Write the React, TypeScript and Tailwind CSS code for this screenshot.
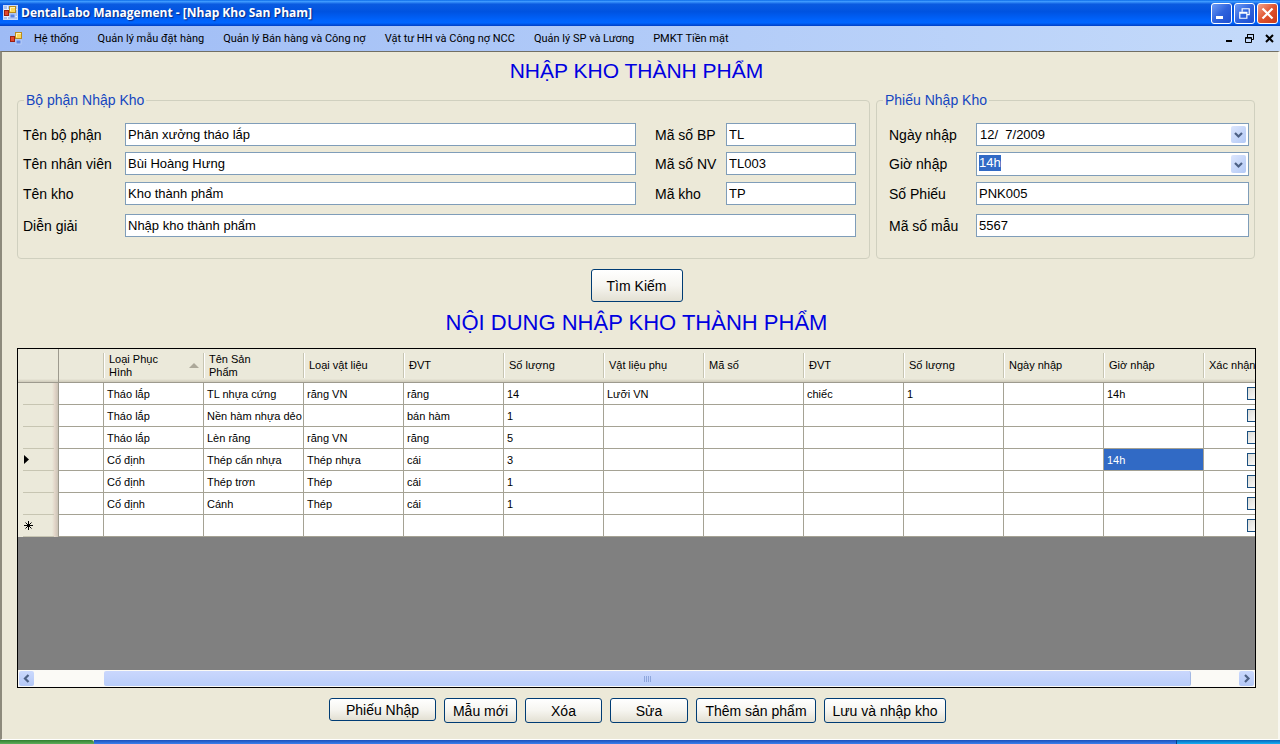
import { useEffect, useRef } from "react";

const MENU = [
  "Hệ thống",
  "Quản lý mẫu đặt hàng",
  "Quản lý Bán hàng và Công nợ",
  "Vật tư HH và Công nợ NCC",
  "Quản lý SP và Lương",
  "PMKT Tiền mặt",
];

const HEADERS = [
  "",
  "Loại Phục Hình",
  "Tên Sản Phẩm",
  "Loại vật liệu",
  "ĐVT",
  "Số lượng",
  "Vật liệu phụ",
  "Mã số",
  "ĐVT",
  "Số lượng",
  "Ngày nhập",
  "Giờ nhập",
];

const ROWS: string[][] = [
  ["", "Tháo lắp", "TL nhựa cứng", "răng VN", "răng", "14", "Lưỡi VN", "", "chiếc", "1", "", "14h"],
  ["", "Tháo lắp", "Nền hàm nhựa dẻo", "", "bán hàm", "1", "", "", "", "", "", ""],
  ["", "Tháo lắp", "Lèn răng", "răng VN", "răng", "5", "", "", "", "", "", ""],
  ["", "Cố định", "Thép cẩn nhựa", "Thép nhựa", "cái", "3", "", "", "", "", "", "14h"],
  ["", "Cố định", "Thép trơn", "Thép", "cái", "1", "", "", "", "", "", ""],
  ["", "Cố định", "Cánh", "Thép", "cái", "1", "", "", "", "", "", ""],
  ["", "", "", "", "", "", "", "", "", "", "", ""],
];

const ACTIVE_ROW = 3;
const NEW_ROW = 6;

const FIELD =
  "block h-[23px] w-full min-w-0 border border-[#7f9db9] bg-white px-[2px] text-[13px] leading-4 text-black outline-none";
const BUTTON =
  "rounded-[3px] border border-[#003c74] bg-gradient-to-b from-white via-[#f6f5f0] to-[#e3e0d3] text-[14px] leading-4 text-black";

function FormsIcon({ framed }: { framed?: boolean }) {
  return (
    <svg viewBox="0 0 16 16" className="size-4 shrink-0" aria-hidden="true">
      {framed && (
        <>
          <rect x="0.5" y="0.5" width="14" height="14" fill="#a9c1ee" stroke="#c9dafa" />
          <path d="M1 4.5h13M4.5 1v13M1 11.5h13" stroke="#e8f0ff" />
        </>
      )}
      <rect x="1.5" y="5.5" width="4" height="5" fill="#e2472c" stroke="#9c1f12" />
      <rect x="6.5" y="1.5" width="6" height="6" fill="#fbd85a" stroke="#b98c1c" />
      <path d="M7.5 6V2.5H12" fill="none" stroke="#fff3b8" />
      <rect x="7" y="9" width="5" height="4" fill="#5b83e0" stroke="#b9cdf8" />
    </svg>
  );
}

function Chevron({ dir }: { dir: "down" | "left" | "right" }) {
  const d = { down: "M1 3l3.5 3.5L8 3", left: "M6.5 1L3 4.5 6.5 8", right: "M3 1l3.5 3.5L3 8" }[dir];
  return (
    <svg viewBox="0 0 9 9" className="size-[9px]" aria-hidden="true">
      <path d={d} fill="none" stroke="#4d6185" strokeWidth="2.2" />
    </svg>
  );
}

function DropButton({ label }: { label: string }) {
  return (
    <button
      type="button"
      aria-label={label}
      className="mr-[2px] flex w-[15px] shrink-0 items-center justify-center self-stretch rounded-[2px] bg-gradient-to-br from-[#dce6fd] to-[#b3c9f5]"
    >
      <Chevron dir="down" />
    </button>
  );
}

function Label({ id, text, inset }: { id: string; text: string; inset?: boolean }) {
  return (
    <label
      htmlFor={id}
      className={`whitespace-nowrap text-[14px] leading-6 text-black ${inset ? "pl-[19px]" : ""}`}
    >
      {text}
    </label>
  );
}

function RestoreGlyph({ color, className }: { color: string; className: string }) {
  return (
    <svg viewBox="0 0 11 11" className={className} aria-hidden="true">
      <path d="M3.5 4V1.5h6v5H7.5M3 1.5h7" fill="none" stroke={color} />
      <path d="M1.5 4.5h6v5h-6zM1 5.2h7" fill="none" stroke={color} />
    </svg>
  );
}

export default function App() {
  const timeRef = useRef<HTMLInputElement>(null);
  useEffect(() => {
    timeRef.current?.focus();
    timeRef.current?.select();
  }, []);

  return (
    <div className="flex min-h-screen flex-col bg-[#ece9d8] font-['Liberation_Sans',Arial,sans-serif] text-black">
      <header>
        <div className="flex h-[26px] items-center bg-[linear-gradient(180deg,#0a6be8_0%,#3f9bff_6%,#0a5be0_16%,#0053e1_45%,#0062fb_75%,#0066ff_88%,#003fc4_100%)] pl-[3px] pr-[2px]">
          <FormsIcon framed />
          <h1 className="ml-[2px] flex-1 whitespace-nowrap font-['Open_Sans','Noto_Sans',sans-serif] text-[12px] font-bold leading-4 text-white [text-shadow:1px_1px_1px_#0a2a80]">
            DentalLabo Management - [Nhap Kho San Pham]
          </h1>
          <div className="flex gap-[2px]">
            <button
              type="button"
              aria-label="Minimize"
              className="flex size-[21px] items-center justify-center rounded-[3px] border border-white bg-gradient-to-br from-[#6f9bf5] via-[#2f63dd] to-[#1e4ed0]"
            >
              <svg viewBox="0 0 13 13" className="size-[13px]" aria-hidden="true">
                <path d="M1 10.5h7" stroke="#fff" strokeWidth="3" />
              </svg>
            </button>
            <button
              type="button"
              aria-label="Restore"
              className="flex size-[21px] items-center justify-center rounded-[3px] border border-white bg-gradient-to-br from-[#6f9bf5] via-[#2f63dd] to-[#1e4ed0]"
            >
              <RestoreGlyph color="#fff" className="size-[13px]" />
            </button>
            <button
              type="button"
              aria-label="Close"
              className="flex size-[21px] items-center justify-center rounded-[3px] border border-white bg-gradient-to-br from-[#f0a088] via-[#e0522c] to-[#c8381a]"
            >
              <svg viewBox="0 0 13 13" className="size-[13px]" aria-hidden="true">
                <path d="M1.5 1.5l10 10M11.5 1.5l-10 10" stroke="#fff" strokeWidth="2.2" />
              </svg>
            </button>
          </div>
        </div>
        <nav className="flex h-[25px] items-center bg-gradient-to-r from-[#9ebbf5] to-[#c4dafa] pl-[9px] pr-[5px]">
          <FormsIcon />
          <div className="ml-[9px] flex flex-1 gap-[19px] font-['Roboto','Noto_Sans',sans-serif] text-[11px] leading-4">
            {MENU.map((item) => (
              <button type="button" key={item} className="whitespace-nowrap">
                {item}
              </button>
            ))}
          </div>
          <div className="flex items-center gap-[9px]">
            <button type="button" aria-label="Minimize form">
              <svg viewBox="0 0 11 11" className="block size-[11px]" aria-hidden="true">
                <path d="M2 8h6" stroke="#000" strokeWidth="2" />
              </svg>
            </button>
            <button type="button" aria-label="Restore form">
              <RestoreGlyph color="#000" className="block size-[11px]" />
            </button>
            <button type="button" aria-label="Close form">
              <svg viewBox="0 0 11 11" className="block size-[11px]" aria-hidden="true">
                <path d="M2 2l7 7M9 2l-7 7" stroke="#000" strokeWidth="2" />
              </svg>
            </button>
          </div>
        </nav>
      </header>

      <main className="flex flex-1 flex-col border-b border-l-2 border-r-2 border-t border-b-white border-l-[#8d8a7c] border-r-[#f8f7f0] border-t-[#716f64] pb-4 pl-[15px] pr-[22px] pt-[7px]">
        <h2 className="text-center text-[21px] leading-6 text-[#0000e0]">NHẬP KHO THÀNH PHẨM</h2>

        <div className="mr-px mt-[9px] flex gap-[6px]">
          <fieldset className="min-w-0 flex-1 rounded-[4px] border border-[#d0d0bf] pb-[21px] pl-[5px] pr-[13px]">
            <legend className="ml-[1px] px-[2px] text-[14px] leading-4 text-[#1546c0]">Bộ phận Nhập Kho</legend>
            <div className="grid grid-cols-[102px_1fr_90px_130px] grid-rows-[29px_30px_32px_23px] items-start pt-[15px]">
              <Label id="dept" text="Tên bộ phận" />
              <input id="dept" className={FIELD} defaultValue="Phân xưởng tháo lắp" />
              <Label id="deptCode" text="Mã số BP" inset />
              <input id="deptCode" className={FIELD} defaultValue="TL" />

              <Label id="staff" text="Tên nhân viên" />
              <input id="staff" className={FIELD} defaultValue="Bùi Hoàng Hưng" />
              <Label id="staffCode" text="Mã số NV" inset />
              <input id="staffCode" className={FIELD} defaultValue="TL003" />

              <Label id="store" text="Tên kho" />
              <input id="store" className={FIELD} defaultValue="Kho thành phẩm" />
              <Label id="storeCode" text="Mã kho" inset />
              <input id="storeCode" className={FIELD} defaultValue="TP" />

              <Label id="note" text="Diễn giải" />
              <div className="col-span-3">
                <input id="note" className={FIELD} defaultValue="Nhập kho thành phẩm" />
              </div>
            </div>
          </fieldset>

          <fieldset className="w-[379px] min-w-0 shrink-0 rounded-[4px] border border-[#d0d0bf] pb-[21px] pl-3 pr-[5px]">
            <legend className="-ml-[6px] px-[2px] text-[14px] leading-4 text-[#1546c0]">Phiếu Nhập Kho</legend>
            <div className="grid grid-cols-[87px_1fr] grid-rows-[29px_30px_32px_23px] items-start pt-[15px]">
              <Label id="date" text="Ngày nhập" />
              <div className="flex h-[23px] border border-[#7f9db9] bg-white py-[2px]">
                <input
                  id="date"
                  className="w-full min-w-0 whitespace-pre bg-transparent pl-[3px] text-[13px] leading-4 outline-none"
                  defaultValue="12/  7/2009"
                />
                <DropButton label="Chọn ngày" />
              </div>
              <Label id="time" text="Giờ nhập" />
              <div className="flex h-6 border border-[#7f9db9] bg-white py-[2px]">
                <input
                  id="time"
                  ref={timeRef}
                  role="combobox"
                  aria-expanded="false"
                  aria-controls="time"
                  className="w-full min-w-0 bg-transparent pb-[2px] pl-[2px] text-[13px] leading-4 outline-none selection:bg-[#316ac5] selection:text-white"
                  defaultValue="14h"
                />
                <DropButton label="Chọn giờ" />
              </div>
              <Label id="voucher" text="Số Phiếu" />
              <input id="voucher" className={FIELD} defaultValue="PNK005" />
              <Label id="sample" text="Mã số mẫu" />
              <input id="sample" className={FIELD} defaultValue="5567" />
            </div>
          </fieldset>
        </div>

        <button type="button" className={`${BUTTON} mt-[10px] h-[33px] w-[92px] self-center`}>
          Tìm Kiếm
        </button>

        <h2 className="mt-2 text-center text-[22px] leading-[26px] text-[#0000e0]">
          NỘI DUNG NHẬP KHO THÀNH PHẨM
        </h2>

        <div className="mt-3 flex min-h-[260px] flex-1 flex-col border border-black bg-[#808080]">
          <div className="flex-1 overflow-hidden">
            <table className="w-[1286px] table-fixed border-separate border-spacing-0 text-[11px] leading-[13px]">
              <colgroup>
                <col className="w-[41px]" />
                <col className="w-[45px]" />
                {HEADERS.slice(1).map((_, i) => (
                  <col key={i} className="w-[100px]" />
                ))}
                <col className="w-[100px]" />
              </colgroup>
              <thead>
                <tr className="h-[34px] bg-[linear-gradient(180deg,#ebe9da_0%,#ebe9da_88%,#d6d2c2_94%,#cbc7b8_100%)]">
                  <td className="border-b border-r border-[#9d9a8e] p-0" />
                  {HEADERS.map((h, i) => (
                    <th key={i} scope="col" className="border-b border-[#9d9a8e] p-0 text-left font-normal">
                      <div className="flex h-[25px] items-center justify-between border-r border-[#c7c5b2] pl-[5px] pr-1 shadow-[1px_0_0_#fff]">
                        <span className={i === 1 || i === 2 ? "w-[60px]" : "whitespace-nowrap"}>{h}</span>
                        {i === 1 && (
                          <svg viewBox="0 0 10 5" className="h-[5px] w-[10px]" aria-hidden="true">
                            <path d="M0 5l5-5 5 5z" fill="#aca899" />
                          </svg>
                        )}
                      </div>
                    </th>
                  ))}
                  <th scope="col" className="border-b border-[#9d9a8e] p-0 pl-[5px] text-left font-normal">
                    Xác nhận
                  </th>
                </tr>
              </thead>
              <tbody>
                {ROWS.map((row, r) => (
                  <tr key={r} className="h-[22px] bg-white">
                    <th
                      scope="row"
                      className="border-r border-[#9d9a8e] bg-[linear-gradient(90deg,#ebe9da_85%,#e2d5c8_92%,#cbc3b6_100%)] p-0"
                    >
                      <div className="ml-[5px] mr-1 flex h-[22px] items-center border-b border-[#c7c5b2]">
                        {r === ACTIVE_ROW && (
                          <svg viewBox="0 0 5 9" className="ml-px h-[9px] w-[5px]" role="img" aria-label="Current row">
                            <path d="M0 0l5 4.5L0 9z" fill="#000" />
                          </svg>
                        )}
                        {r === NEW_ROW && (
                          <svg viewBox="0 0 9 9" className="ml-px size-[9px]" role="img" aria-label="New row">
                            <path d="M4.5 0v9M0 4.5h9M1.5 1.5l6 6M7.5 1.5l-6 6" stroke="#000" />
                          </svg>
                        )}
                      </div>
                    </th>
                    {row.map((cell, c) => (
                      <td
                        key={c}
                        className={`whitespace-nowrap border-b border-r border-[#a5a294] pb-0 pl-[3px] pr-0 pt-[2px] ${
                          r === ACTIVE_ROW && c === 11 ? "bg-[#316ac5] text-white" : ""
                        }`}
                      >
                        {cell}
                      </td>
                    ))}
                    <td className="border-b border-r border-[#a5a294] p-0">
                      <input
                        type="checkbox"
                        aria-label={`Xác nhận ${r + 1}`}
                        className="mx-auto block size-[13px] appearance-none border border-[#1c5180] bg-gradient-to-br from-[#dcdcd7] to-white"
                      />
                    </td>
                  </tr>
                ))}
              </tbody>
            </table>
          </div>
          <div className="flex h-[17px] items-stretch bg-[#fbfaf6] p-[1px]">
            <button
              type="button"
              aria-label="Scroll left"
              className="flex w-[15px] items-center justify-center rounded-[2px] bg-gradient-to-b from-[#cbd9fd] to-[#b4c8f6]"
            >
              <Chevron dir="left" />
            </button>
            <div className="flex flex-1 pl-[70px] pr-[48px]">
              <div className="flex flex-1 items-center justify-center gap-[1px] rounded-[2px] border-r border-[#a3b8e4] bg-gradient-to-b from-[#cad7fd] to-[#b9cdf9]">
                <span className="h-[6px] w-[1px] bg-[#8ea6dc]" />
                <span className="h-[6px] w-[1px] bg-[#8ea6dc]" />
                <span className="h-[6px] w-[1px] bg-[#8ea6dc]" />
                <span className="h-[6px] w-[1px] bg-[#8ea6dc]" />
              </div>
            </div>
            <button
              type="button"
              aria-label="Scroll right"
              className="flex w-[15px] items-center justify-center rounded-[2px] bg-gradient-to-b from-[#cbd9fd] to-[#b4c8f6]"
            >
              <Chevron dir="right" />
            </button>
          </div>
        </div>

        <div className="mt-[10px] flex items-start justify-center gap-2 pl-[2px]">
          <button type="button" className={`${BUTTON} h-[23px] w-[107px]`}>Phiếu Nhập</button>
          <button type="button" className={`${BUTTON} h-[25px] w-[73px]`}>Mẫu mới</button>
          <button type="button" className={`${BUTTON} h-[25px] w-[77px]`}>Xóa</button>
          <button type="button" className={`${BUTTON} h-[25px] w-[78px]`}>Sửa</button>
          <button type="button" className={`${BUTTON} h-[25px] w-[120px]`}>Thêm sản phẩm</button>
          <button type="button" className={`${BUTTON} h-[25px] w-[122px]`}>Lưu và nhập kho</button>
        </div>
      </main>

      <footer className="flex h-1">
        <div className="w-[94px] rounded-tr-[3px] bg-gradient-to-b from-[#2f7d2f] to-[#5fae5c]" />
        <div className="flex-1 bg-gradient-to-b from-[#1c4fb8] to-[#3b80ee]" />
        <div className="w-[104px] border-l border-[#0b3f86] bg-gradient-to-b from-[#0b62b8] to-[#19b0f4]" />
      </footer>
    </div>
  );
}
